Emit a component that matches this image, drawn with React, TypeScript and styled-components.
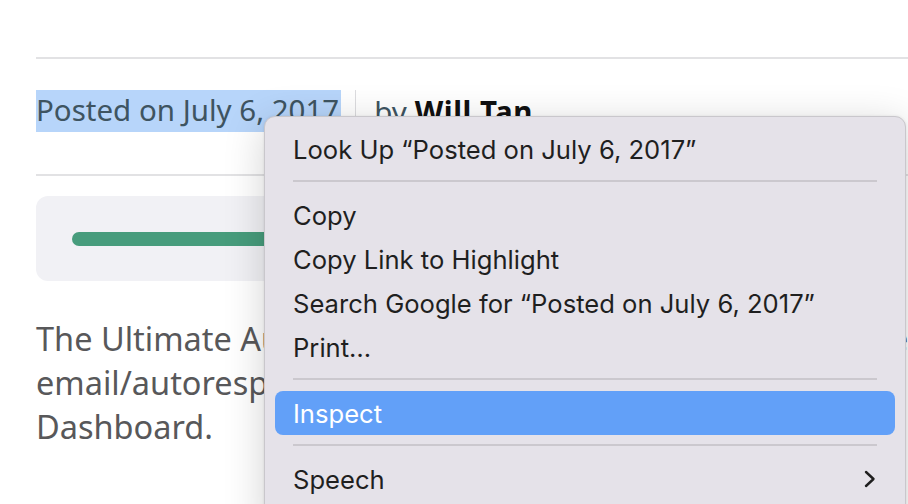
import React from "react";
import styled, { createGlobalStyle } from "styled-components";

const GlobalStyle = createGlobalStyle`
  html, body {
    margin: 0;
    padding: 0;
    background: #ffffff;
  }
  body {
    width: 908px;
    height: 504px;
    overflow: hidden;
  }
`;

const Page = styled.div`
  position: relative;
  width: 908px;
  height: 504px;
  overflow: hidden;
  padding-left: 36px;
  box-sizing: border-box;
  font-family: "Noto Sans", "Open Sans", sans-serif;
`;

const Rule = styled.hr<{ $top: number }>`
  margin: ${(p) => p.$top}px 0 0;
  border: 0;
  height: 2px;
  background: #e2e2e4;
  width: 900px;
`;

const Meta = styled.div`
  display: flex;
  align-items: center;
  height: 42px;
  margin-top: 31px;
  font-size: 29.5px;
  color: #3e5461;
  white-space: nowrap;
`;

const Selected = styled.span`
  background: #b7d5fa;
  height: 42px;
  line-height: 40px;
  padding-right: 2px;
`;

const Divider = styled.span`
  width: 1px;
  height: 42px;
  background: #dcdcdf;
  margin: 0 18px 0 14px;
`;

const Author = styled.strong`
  color: #111;
  font-weight: 700;
  margin-left: 8px;
  letter-spacing: 0.5px;
`;

const Card = styled.div`
  margin-top: 20px;
  height: 85px;
  width: 860px;
  border-radius: 12px;
  background: #f1f1f5;
  display: flex;
  align-items: center;
  padding: 0 36px;
  box-sizing: border-box;
`;

const Progress = styled.div`
  height: 14px;
  width: 100%;
  border-radius: 7px;
  background: #479c7c;
`;

const Body = styled.p`
  margin: 36px 0 0;
  width: 880px;
  font-size: 32.5px;
  line-height: 44px;
  color: #58585a;
  white-space: nowrap;
`;

const Menu = styled.div`
  position: absolute;
  left: 264px;
  top: 116px;
  width: 642px;
  height: 420px;
  box-sizing: border-box;
  padding: 10px 10px;
  border-radius: 11px;
  background: #e5e2e9;
  border: 1px solid #c9c7cc;
  box-shadow: 0 8px 40px rgba(0, 0, 0, 0.18), 0 0 3px rgba(0, 0, 0, 0.08);
  font-family: Inter, "Liberation Sans", sans-serif;
  font-size: 25.6px;
  color: #1f1f1f;
`;

const Item = styled.div<{ $active?: boolean }>`
  display: flex;
  align-items: center;
  justify-content: space-between;
  height: 44px;
  padding: 0 18px;
  border-radius: 8px;
  background: ${(p) => (p.$active ? "#62a0f8" : "transparent")};
  color: ${(p) => (p.$active ? "#ffffff" : "inherit")};
  white-space: nowrap;
`;

const Separator = styled.div`
  height: 2px;
  margin: 9px 18px 11px;
  background: #cbc8ce;
`;

const Chevron = () => (
  <svg width="14" height="18" viewBox="0 0 14 18" fill="none">
    <path d="M3 2 L10.5 9 L3 16" stroke="#1f1f1f" strokeWidth="2.4" strokeLinecap="round" strokeLinejoin="round" />
  </svg>
);

export default function App() {
  return (
    <>
      <GlobalStyle />
      <Page>
        <Rule $top={57} />
        <Meta>
          <Selected>Posted on July 6, 2017</Selected>
          <Divider />
          by<Author>Will Tan</Author>
        </Meta>
        <Rule $top={42} />
        <Card>
          <Progress />
        </Card>
        <Body>
          The Ultimate Autoresponder lets you schedule a full series:
          <br />
          email/autoresponder sequences straight from your WP:
          <br />
          Dashboard.
        </Body>
        <Menu>
          <Item>Look Up “Posted on July 6, 2017”</Item>
          <Separator />
          <Item>Copy</Item>
          <Item>Copy Link to Highlight</Item>
          <Item>Search Google for “Posted on July 6, 2017”</Item>
          <Item>Print…</Item>
          <Separator />
          <Item $active>Inspect</Item>
          <Separator />
          <Item>
            Speech
            <Chevron />
          </Item>
        </Menu>
      </Page>
    </>
  );
}
